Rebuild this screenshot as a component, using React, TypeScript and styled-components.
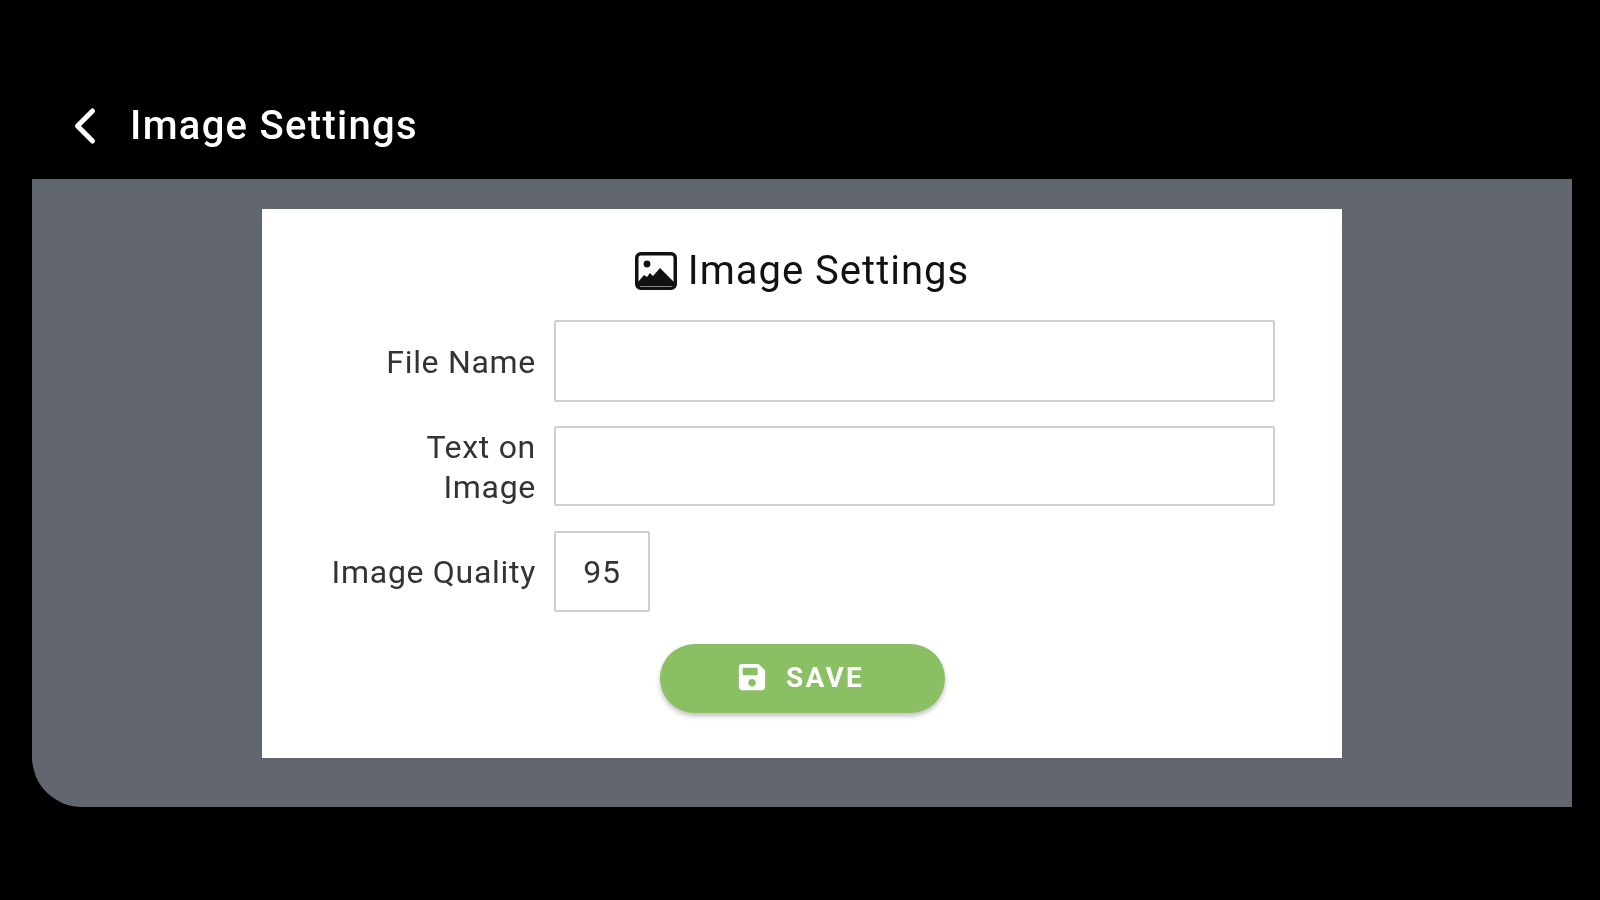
import React from 'react';
import styled, { createGlobalStyle } from 'styled-components';
import { ChevronLeft } from 'lucide-react';
import { FaSave } from 'react-icons/fa';

const GlobalStyle = createGlobalStyle`
  html, body {
    margin: 0;
    height: 100%;
    background: #000;
  }
  body {
    font-family: Roboto, "Liberation Sans", sans-serif;
  }
`;

const Screen = styled.div`
  width: 1600px;
  height: 900px;
  background: #000;
  overflow: hidden;
  filter: blur(0.6px);
`;

const Header = styled.header`
  height: 179px;
  padding: 96px 0 0 55px;
  box-sizing: border-box;
  display: flex;
  align-items: flex-start;
  gap: 15px;
  color: #fff;
`;

const BackIcon = styled(ChevronLeft)`
  flex: none;
`;

const HeaderTitle = styled.h1`
  margin: 7px 0 0;
  font-size: 40px;
  line-height: 46px;
  font-weight: 500;
  letter-spacing: 1.3px;
`;

const Panel = styled.main`
  margin-left: 32px;
  width: 1540px;
  height: 628px;
  padding-top: 30px;
  box-sizing: border-box;
  background: #62666f;
  border-bottom-left-radius: 50px;
`;

const Card = styled.section`
  width: 1080px;
  height: 549px;
  margin: 0 auto;
  padding-top: 39px;
  box-sizing: border-box;
  background: #fff;
  display: flex;
  flex-direction: column;
  align-items: center;
`;

const CardTitle = styled.h2`
  margin: 0 0 26px;
  height: 46px;
  display: flex;
  align-items: center;
  gap: 11px;
  font-size: 40px;
  line-height: 46px;
  font-weight: 400;
  letter-spacing: 1px;
  color: #111;
`;

const Form = styled.form`
  align-self: flex-start;
  display: grid;
  grid-template-columns: 274px 721px;
  column-gap: 18px;
  row-gap: 24px;
`;

const Label = styled.label`
  justify-self: end;
  align-self: center;
  padding-top: 1px;
  text-align: right;
  font-size: 32px;
  line-height: 40px;
  letter-spacing: 0.7px;
  color: #333;
`;

const TextField = styled.input<{ $small?: boolean; $short?: boolean }>`
  width: ${(p) => (p.$small ? '96px' : '721px')};
  height: ${(p) => (p.$short ? '80px' : p.$small ? '81px' : '82px')};
  box-sizing: border-box;
  padding: 0;
  border: 2px solid #cfcfcf;
  border-radius: 2px;
  background: #fff;
  outline: none;
  font: 400 32px Roboto, "Liberation Sans", sans-serif;
  letter-spacing: 0.7px;
  color: #333;
  text-align: center;
`;

const SaveButton = styled.button`
  margin-top: 32px;
  width: 285px;
  height: 69px;
  padding: 0 3px 3px 0;
  border: none;
  border-radius: 35px;
  background: #8bbf63;
  box-shadow: 0 3px 5px rgba(0, 0, 0, 0.25);
  color: #fff;
  display: flex;
  align-items: center;
  justify-content: center;
  gap: 19px;
  font: 700 28px Roboto, "Liberation Sans", sans-serif;
  letter-spacing: 2.2px;
`;

const ImageIcon = () => (
  <svg width="42" height="38" viewBox="0 0 42 38" aria-hidden="true">
    <rect x="1.75" y="1.75" width="38.5" height="34.5" rx="4" fill="none" stroke="currentColor" strokeWidth="3.5" />
    <circle cx="12" cy="12" r="3.4" fill="currentColor" />
    <path d="M3 34 V30 L9 23 L12 25 L15 21 L18 24 L25 16 L39 30 V34 Z" fill="currentColor" />
  </svg>
);

const App: React.FC = () => {
  return (
    <Screen>
      <GlobalStyle />
      <Header>
        <BackIcon size={60} strokeWidth={2} />
        <HeaderTitle>Image Settings</HeaderTitle>
      </Header>
      <Panel>
        <Card>
          <CardTitle>
            <ImageIcon />
            Image Settings
          </CardTitle>
          <Form>
            <Label htmlFor="file-name">File Name</Label>
            <TextField id="file-name" />
            <Label htmlFor="image-text">
              Text on
              <br />
              Image
            </Label>
            <TextField id="image-text" $short />
            <Label htmlFor="quality">Image Quality</Label>
            <TextField id="quality" $small defaultValue="95" />
          </Form>
          <SaveButton type="button">
            <FaSave size={30} />
            SAVE
          </SaveButton>
        </Card>
      </Panel>
    </Screen>
  );
};

export default App;
